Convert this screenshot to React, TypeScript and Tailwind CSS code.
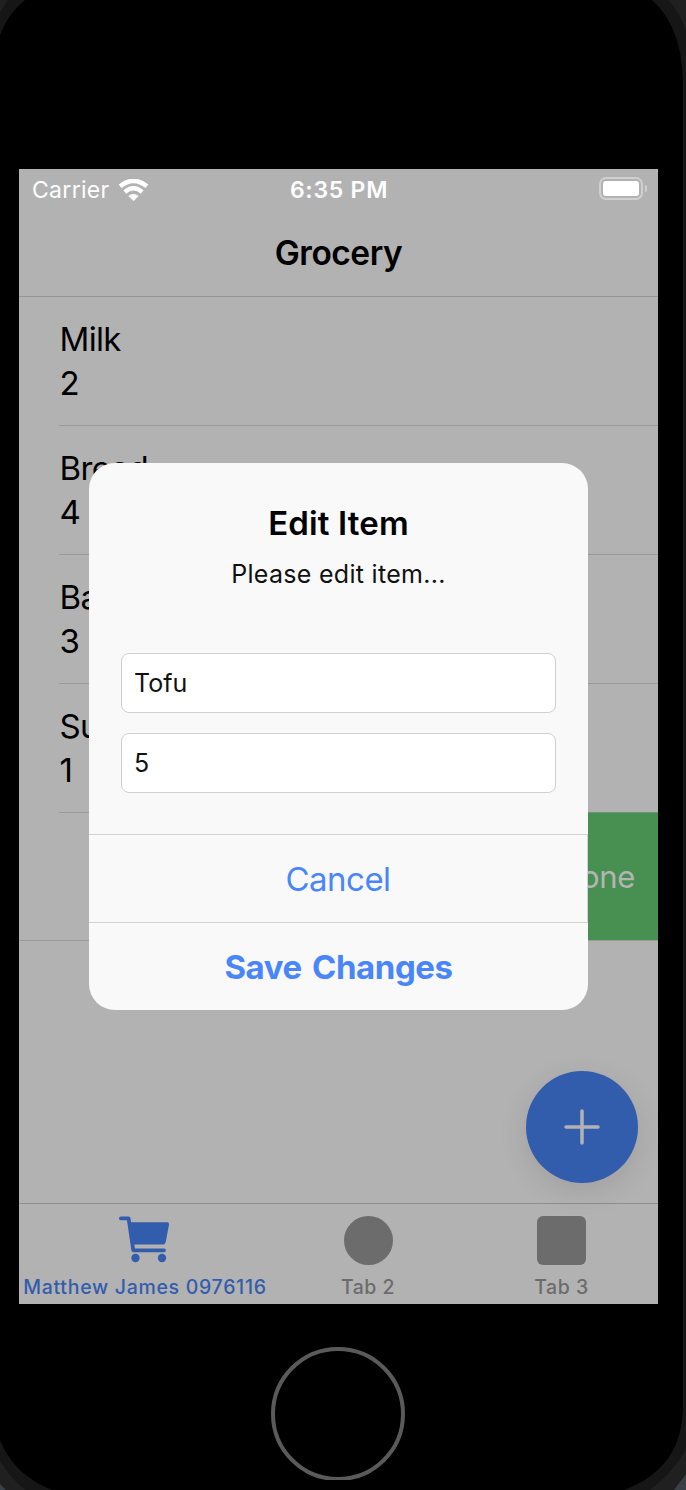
import React from "react";

type Item = { name: string; quantity: number };

const items: Item[] = [
  { name: "Milk", quantity: 2 },
  { name: "Bread", quantity: 4 },
  { name: "Banana", quantity: 3 },
  { name: "Sugar", quantity: 1 },
];

function Bezel() {
  return (
    <svg className="absolute inset-0" width="686" height="1490" viewBox="0 0 686 1490">
      <rect width="686" height="1490" fill="#161616" />
      <path d="M668 0Q680 12 686 31V0ZM0 0H8L0 12ZM0 1461Q10 1477 25 1490H0ZM686 1450Q672 1473 650 1490H686Z" fill="#202020" />
      <path d="M0 1484L6 1490H0ZM686 1474L674 1490H686Z" fill="#3b4046" />
      <path d="M25 0H652C673 19 683 47 683 88V1405C683 1447 664 1475 624 1490H52C27 1480 9 1463 0 1440V35Q7 15 25 0Z" fill="#000" />
    </svg>
  );
}

function StatusBar() {
  return (
    <div className="relative flex h-[42px] items-center justify-between pl-[13px] pr-[11px] text-white">
      <div className="flex items-center gap-[8px]">
        <span className="text-[23px] tracking-[0.3px]">Carrier</span>
        <svg className="-mt-px" width="31" height="22" viewBox="0 0 31 22" fill="none" stroke="#fff">
          <path d="M2.1 7.3Q15.5 -3.6 28.9 7.3" strokeWidth="4.6" />
          <path d="M6.8 13Q15.5 5.6 24.2 13" strokeWidth="4.3" />
          <path d="M10.3 17Q15.5 13 20.7 17L15.5 22Z" fill="#fff" stroke="none" />
        </svg>
      </div>
      <span className="absolute inset-x-0 pl-px text-center text-[23px] font-semibold tracking-[0.75px]">6:35 PM</span>
      <div className="flex items-center gap-[2px] pb-[4px]">
        <div className="h-[23px] w-[44px] rounded-[7px] border-2 border-[#d0d0d0] p-[2px]">
          <div className="h-full w-full rounded-[3px] bg-white" />
        </div>
        <div className="h-[7px] w-[2px] rounded-r-full bg-[#d0d0d0]" />
      </div>
    </div>
  );
}

function EditDialog() {
  return (
    <div className="absolute left-[70px] top-[294px] flex h-[547px] w-[499px] flex-col overflow-hidden rounded-[26px] bg-[#f9f9f9] text-center">
      <h2 className="mt-[40px] h-[40px] text-[33px] font-semibold leading-[40px] tracking-[0.15px] text-black">Edit Item</h2>
      <p className="mt-[15px] h-[32px] text-[25px] leading-[32px] tracking-[0.3px] text-[#111]">Please edit item...</p>
      <div className="mx-[32px] mt-[63px] flex flex-col gap-[20px] text-left text-[25px] text-[#111]">
        <div className="flex h-[60px] items-center rounded-[8px] border-[1.5px] border-[#d0d0d0] bg-white px-[12px] pt-[2px]">Tofu</div>
        <div className="flex h-[60px] items-center rounded-[8px] border-[1.5px] border-[#d0d0d0] bg-white px-[12px] pt-[2px]">5</div>
      </div>
      <button className="mt-[41px] h-[88px] border-r border-t border-[#d2d2d2] pt-[2px] text-[33px] tracking-[-0.5px] text-[#4a86fa]">Cancel</button>
      <button className="h-[88px] border-t border-[#d2d2d2] pt-[2px] text-[33px] font-bold tracking-[-0.45px] [word-spacing:3px] text-[#4a86fa]">Save Changes</button>
    </div>
  );
}

export default function App() {
  return (
    <div className="relative h-[1490px] w-[686px] overflow-hidden font-['Inter','Liberation_Sans',sans-serif]">
      <Bezel />
      <div className="relative flex flex-col items-center pr-[9px] pt-[169px]">
        <div className="relative flex h-[1135px] w-[639px] flex-col overflow-hidden bg-[#b2b2b2]">
          <StatusBar />
          <header className="flex h-[86px] items-center justify-center border-b border-[#949494] text-[33.5px] font-semibold tracking-[-0.5px]">Grocery</header>
          <main className="relative flex-1">
            {items.map((item) => (
              <div key={item.name} className="ml-[40px] h-[129px] border-b border-[#999] pl-[0.5px] pt-[20px] text-[33px] leading-[44px] tracking-[-0.65px]">
                <div>{item.name}</div>
                <div>{item.quantity}</div>
              </div>
            ))}
            <div className="-mt-px flex h-[129px] justify-end border-b border-[#999]">
              <div className="flex w-[118px] items-center justify-end border-t border-[#6f9376] bg-[#479052] pr-[23px] pt-[2px] text-[31px] tracking-[-0.3px] text-[#b4b4b4]">Done</div>
            </div>
            <div className="absolute right-[20px] top-[774px] flex size-[112px] items-center justify-center rounded-full bg-[#325dad] shadow-[0_8px_30px_rgba(0,0,0,0.1)]">
              <svg width="36" height="36" viewBox="0 0 36 36" stroke="#b2b2b2" strokeWidth="3.5" strokeLinecap="round">
                <path d="M18 2V34M2 18H34" />
              </svg>
            </div>
          </main>
          <nav className="flex h-[101px] border-t border-[#8e8e8e] text-[19.5px] font-medium text-[#6c6c6c]">
            <div className="flex w-[252px] flex-col items-center pt-[12px] text-[#325dad]">
              <svg className="-ml-[2px]" width="50" height="49" viewBox="0 0 50 49" fill="none" stroke="#325dad" strokeWidth="3.8" strokeLinecap="round" strokeLinejoin="round">
                <path d="M1.9 2.4H9.6L14.3 34.3H45" />
                <path d="M11.5 6.3H48Q50.3 6.3 50 8.8L46.8 25.8Q46.2 28.6 43.5 28.6H14.5Z" fill="#325dad" stroke="none" />
                <circle cx="16.5" cy="42" r="4.2" fill="#325dad" stroke="none" />
                <circle cx="43" cy="42" r="4.2" fill="#325dad" stroke="none" />
              </svg>
              <span className="mt-[9px] whitespace-nowrap leading-[26px] tracking-[0.7px]">Matthew James 0976116</span>
            </div>
            <div className="flex w-[194px] flex-col items-center pt-[12px]">
              <div className="size-[49px] rounded-full bg-[#6c6c6c]" />
              <span className="mt-[9px] leading-[26px] tracking-[0.5px]">Tab 2</span>
            </div>
            <div className="flex w-[193px] flex-col items-center pt-[12px]">
              <div className="size-[49px] rounded-[6px] bg-[#6c6c6c]" />
              <span className="mt-[9px] leading-[26px] tracking-[0.5px]">Tab 3</span>
            </div>
          </nav>
          <EditDialog />
        </div>
        <div className="mr-[2px] mt-[43px] h-[133px] w-[134px] overflow-hidden">
          <div className="size-[134px] rounded-full border-4 border-[#5a5a5a]" />
        </div>
      </div>
    </div>
  );
}
